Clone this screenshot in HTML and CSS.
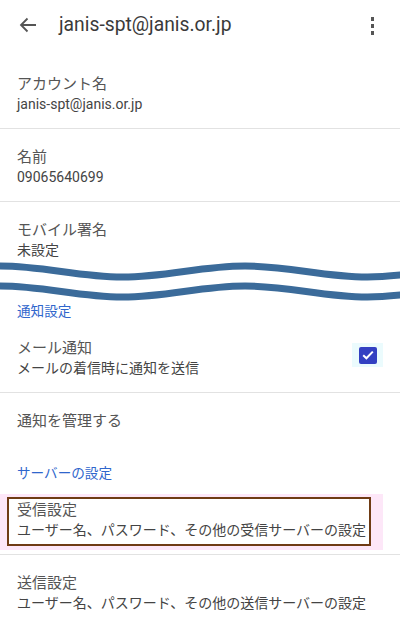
FILE: index.html
```html
<!DOCTYPE html>
<html lang="ja">
<head>
    <meta charset="UTF-8">
    <meta name="viewport" content="width=device-width, initial-scale=1.0">
    <title>janis-spt@janis.or.jp</title>
    <link rel="stylesheet" href="styles.css">
</head>
<body>
    <div class="top-bar">
        <svg class="icon-back" width="18" height="16" viewBox="0 0 18 16">
            <path d="M17 8H2M8.5 1.5L2 8l6.5 6.5" fill="none" stroke="#555" stroke-width="1.8"/>
        </svg>
        <h1>janis-spt@janis.or.jp</h1>
        <div class="icon-more">
            <span></span><span></span><span></span>
        </div>
    </div>

    <div class="item">
        <div class="item-title">アカウント名</div>
        <div class="item-sub">janis-spt@janis.or.jp</div>
    </div>
    <div class="item">
        <div class="item-title">名前</div>
        <div class="item-sub">09065640699</div>
    </div>
    <div class="item item-cut">
        <div class="item-title">モバイル署名</div>
        <div class="item-sub">未設定</div>
    </div>

    <svg class="wave" width="400" height="40" viewBox="0 0 400 40">
        <path d="M0,4 C44.6,4 77.9,15 122.5,15 S200.6,4 245,4 S322.9,15 367.5,15 S445.6,4 490,4" fill="none" stroke="#3b6b9a" stroke-width="7"/>
        <path d="M0,24 C44.6,24 77.9,35 122.5,35 S200.6,24 245,24 S322.9,35 367.5,35 S445.6,24 490,24" fill="none" stroke="#3b6b9a" stroke-width="7"/>
    </svg>

    <div class="section-title first">通知設定</div>
    <div class="item item-check">
        <div>
            <div class="item-title">メール通知</div>
            <div class="item-sub">メールの着信時に通知を送信</div>
        </div>
        <div class="check-wrap">
            <div class="checkbox">
                <svg width="12" height="10" viewBox="0 0 12 10">
                    <path d="M1.2 5.2l3.2 3.1L10.8 1.6" fill="none" stroke="#fff" stroke-width="2"/>
                </svg>
            </div>
        </div>
    </div>
    <div class="item item-single">
        <div class="item-title">通知を管理する</div>
    </div>

    <div class="section-title">サーバーの設定</div>
    <div class="item item-marked">
        <div class="mark"></div>
        <div class="item-title">受信設定</div>
        <div class="item-sub">ユーザー名、パスワード、その他の受信サーバーの設定</div>
    </div>
    <div class="item">
        <div class="item-title">送信設定</div>
        <div class="item-sub">ユーザー名、パスワード、その他の送信サーバーの設定</div>
    </div>
</body>
</html>
```

FILE: styles.css
```css
body {
    margin: 0;
    background-color: #fff;
    font-family: Roboto, "Noto Sans CJK JP", sans-serif;
    overflow: hidden;
}
.top-bar {
    height: 56px;
    display: flex;
    align-items: flex-start;
    padding-top: 15px;
    box-sizing: border-box;
}
.icon-back {
    margin: 2px 22px 0 19px;
}
.top-bar h1 {
    margin: 0;
    font-size: 19.3px;
    font-weight: 400;
    line-height: 20px;
    color: #3a3a3a;
    flex: 1;
}
.icon-more {
    display: flex;
    flex-direction: column;
    gap: 3.5px;
    margin: 2px 26px 0 0;
}
.icon-more span {
    width: 3.5px;
    height: 3.5px;
    background-color: #555;
}
.item {
    padding: 18px 16px 14px 17px;
    border-bottom: 1px solid #e2e2e2;
}
.item-title {
    font-size: 15px;
    line-height: 20px;
    color: #555;
}
.item-sub {
    font-size: 14px;
    line-height: 20px;
    color: #444;
}
.item-cut {
    padding-bottom: 2px;
    border-bottom: none;
}
.wave {
    display: block;
}
.section-title {
    font-size: 13.6px;
    line-height: 18px;
    color: #2f66cc;
    padding: 23px 17px 0;
}
.section-title.first {
    padding-top: 0;
}
.item-check {
    display: flex;
    justify-content: space-between;
    align-items: flex-start;
}
.check-wrap {
    width: 31px;
    height: 24px;
    margin: 5px 1px 0 0;
    background-color: #ebfbfd;
    display: flex;
    align-items: center;
    justify-content: center;
}
.checkbox {
    width: 18px;
    height: 17px;
    border-radius: 2px;
    background-color: #3340c2;
    display: flex;
    align-items: center;
    justify-content: center;
}
.item-single {
    padding-bottom: 10px;
    border-bottom: none;
}
.item-marked {
    position: relative;
}
.item-marked .item-title,
.item-marked .item-sub {
    position: relative;
}
.mark {
    position: absolute;
    left: 0;
    top: 12px;
    width: 383px;
    height: 56px;
    background-color: #fde7f8;
}
.mark::after {
    content: "";
    position: absolute;
    left: 7px;
    top: 3px;
    right: 12px;
    bottom: 4px;
    border: 2px solid #6f3b14;
    background-color: #fff;
}
```
